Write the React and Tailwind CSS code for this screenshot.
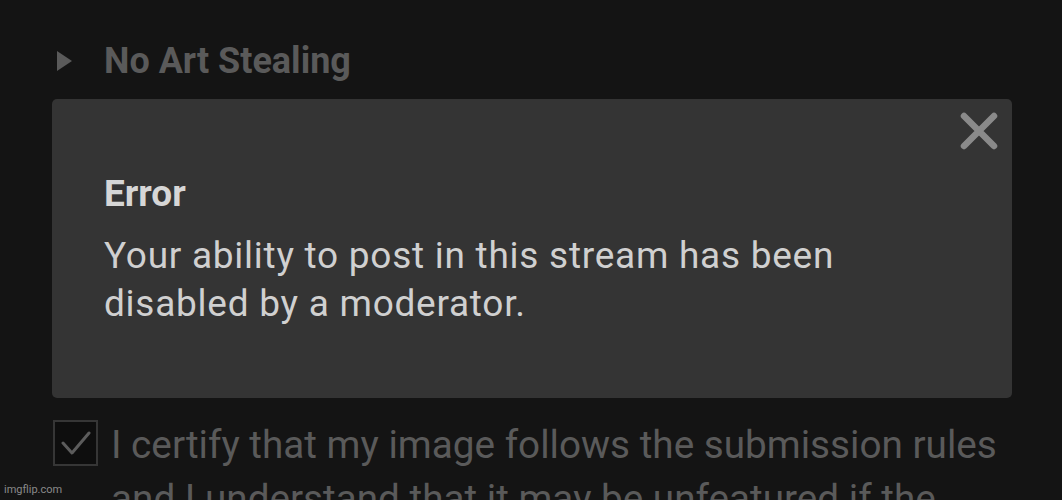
import React from "react";

const font = { fontFamily: "Roboto, 'Noto Sans', sans-serif" };

const CloseIcon = () => (
    <svg width="38" height="38" viewBox="0 0 38 38" fill="none">
        <path d="M4 4 L34 34 M34 4 L4 34" stroke="#8a8a8a" strokeWidth="6.5" strokeLinecap="round"/>
    </svg>
);

const CheckIcon = () => (
    <svg width="30" height="24" viewBox="0 0 30 24" fill="none">
        <path d="M2 12 L11 22 L28 2" stroke="#5c5c5c" strokeWidth="3" strokeLinecap="round" strokeLinejoin="round"/>
    </svg>
);

export default function App() {
    return (
        <div className="relative w-[1062px] h-[500px] overflow-hidden bg-[#141414] font-['Roboto',sans-serif]">
            <div className="flex items-center h-[60px] mt-[31px] pl-[57px]">
                <span className="w-0 h-0 border-y-[10px] border-y-transparent border-l-[15px] border-l-[#5a5a5a]"/>
                <h2 className="ml-[32px] text-[36px] font-bold text-[#5a5a5a] leading-none">No Art Stealing</h2>
            </div>

            <div className="relative ml-[52px] mr-[50px] mt-[8px] h-[299px] rounded-[5px] bg-[#343434] pl-[52px] pt-[73px]">
                <button className="absolute right-[14px] top-[13px]">
                    <CloseIcon/>
                </button>
                <h3 className="text-[37px] font-bold text-[#d6d6d6] leading-[44px]">Error</h3>
                <p className="mt-[16px] text-[37px] tracking-[0.02em] text-[#d0d0d0] leading-[48px] w-[800px]">
                    Your ability to post in this stream has been disabled by a moderator.
                </p>
            </div>

            <div className="flex mt-[22px] pl-[53px]">
                <div className="shrink-0 w-[45px] h-[46px] border-2 border-[#363636] bg-[#0e0e0e] flex items-center justify-center">
                    <CheckIcon/>
                </div>
                <p className="ml-[13px] w-[910px] text-[38.7px] text-[#5a5a5a] leading-[54px] -mt-[2px]">
                    I certify that my image follows the submission rules and I understand that it may be unfeatured if the rules are broken
                </p>
            </div>

            <div className="absolute left-[4px] bottom-[2px] text-[11px] text-[#8a8a8a]" style={font}>imgflip.com</div>
        </div>
    );
}
